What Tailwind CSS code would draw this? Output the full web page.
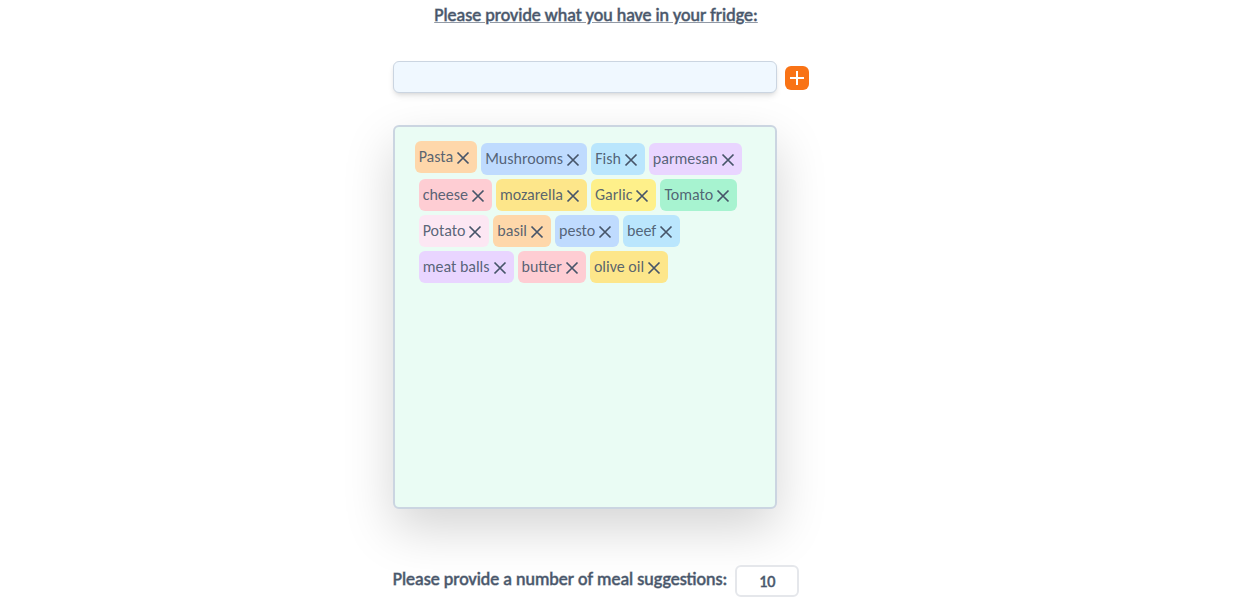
<!DOCTYPE html>
<html lang="en">
<head>
<meta charset="utf-8">
<meta name="viewport" content="width=device-width, initial-scale=1">
<title>Fridge meals</title>
<script src="https://cdn.jsdelivr.net/npm/@tailwindcss/browser@4"></script>
</head>
<body class="bg-white font-[Carlito,Lato,sans-serif] text-base text-[#475569]">
<svg class="hidden"><symbol id="x" viewBox="0 0 20 20"><path d="M4.5 4.5l11 11M15.5 4.5l-11 11" fill="none" stroke="#475569" stroke-width="1.7"/></symbol></svg>
<main class="flex justify-center pr-[43px] pt-px">
<form class="flex flex-col">
  <label for="item" class="self-center text-lg leading-7 underline [-webkit-text-stroke:1px_#47556999]">Please provide what you have in your fridge:</label>
  <div class="mt-8 flex items-center gap-2">
    <input id="item" type="text" class="h-8 w-96 rounded-md border border-[#cbd5e1] bg-[#f0f8ff] px-2 shadow-md">
    <button type="button" aria-label="Add" class="mt-0.5 -mr-3 flex size-6 items-center justify-center rounded-md bg-[#f97316] text-white">
      <svg class="size-6" viewBox="0 0 24 24"><path d="M12 5v14M5 12h14" fill="none" stroke="currentColor" stroke-width="2"/></svg>
    </button>
  </div>
  <ul class="mt-8 flex h-96 w-96 flex-wrap content-start items-start rounded-md border-2 border-[#cbd5e1] bg-[#eafcf4] px-5 pt-3.5 text-[#475569]/90 shadow-[0_20px_50px_rgba(0,0,0,0.17)]">
    <li class="flex h-8 items-center rounded-md bg-[#fed7aa] px-1">Pasta<button type="button" aria-label="Remove Pasta" class="pt-0.5"><svg class="size-5"><use href="#x"/></svg></button></li>
    <li class="my-0.5 ml-1 flex h-8 items-center rounded-md bg-[#bfdbfe] px-1">Mushrooms<button type="button" aria-label="Remove Mushrooms" class="pt-0.5"><svg class="size-5"><use href="#x"/></svg></button></li>
    <li class="my-0.5 ml-1 flex h-8 items-center rounded-md bg-[#bae6fd] px-1">Fish<button type="button" aria-label="Remove Fish" class="pt-0.5"><svg class="size-5"><use href="#x"/></svg></button></li>
    <li class="my-0.5 ml-1 flex h-8 items-center rounded-md bg-[#e9d5ff] px-1">parmesan<button type="button" aria-label="Remove parmesan" class="pt-0.5"><svg class="size-5"><use href="#x"/></svg></button></li>
    <li class="my-0.5 ml-1 flex h-8 items-center rounded-md bg-[#fecdd3] px-1">cheese<button type="button" aria-label="Remove cheese" class="pt-0.5"><svg class="size-5"><use href="#x"/></svg></button></li>
    <li class="my-0.5 ml-1 flex h-8 items-center rounded-md bg-[#fde68a] px-1">mozarella<button type="button" aria-label="Remove mozarella" class="pt-0.5"><svg class="size-5"><use href="#x"/></svg></button></li>
    <li class="my-0.5 ml-1 flex h-8 items-center rounded-md bg-[#fef08a] px-1">Garlic<button type="button" aria-label="Remove Garlic" class="pt-0.5"><svg class="size-5"><use href="#x"/></svg></button></li>
    <li class="my-0.5 ml-1 flex h-8 items-center rounded-md bg-[#a7f3d0] px-1">Tomato<button type="button" aria-label="Remove Tomato" class="pt-0.5"><svg class="size-5"><use href="#x"/></svg></button></li>
    <li class="my-0.5 ml-1 flex h-8 items-center rounded-md bg-[#fce7f3] px-1">Potato<button type="button" aria-label="Remove Potato" class="pt-0.5"><svg class="size-5"><use href="#x"/></svg></button></li>
    <li class="my-0.5 ml-1 flex h-8 items-center rounded-md bg-[#fed7aa] px-1">basil<button type="button" aria-label="Remove basil" class="pt-0.5"><svg class="size-5"><use href="#x"/></svg></button></li>
    <li class="my-0.5 ml-1 flex h-8 items-center rounded-md bg-[#bfdbfe] px-1">pesto<button type="button" aria-label="Remove pesto" class="pt-0.5"><svg class="size-5"><use href="#x"/></svg></button></li>
    <li class="my-0.5 ml-1 flex h-8 items-center rounded-md bg-[#bae6fd] px-1">beef<button type="button" aria-label="Remove beef" class="pt-0.5"><svg class="size-5"><use href="#x"/></svg></button></li>
    <li class="my-0.5 ml-1 flex h-8 items-center rounded-md bg-[#e9d5ff] px-1">meat balls<button type="button" aria-label="Remove meat balls" class="pt-0.5"><svg class="size-5"><use href="#x"/></svg></button></li>
    <li class="my-0.5 ml-1 flex h-8 items-center rounded-md bg-[#fecdd3] px-1">butter<button type="button" aria-label="Remove butter" class="pt-0.5"><svg class="size-5"><use href="#x"/></svg></button></li>
    <li class="my-0.5 ml-1 flex h-8 items-center rounded-md bg-[#fde68a] px-1">olive oil<button type="button" aria-label="Remove olive oil" class="pt-0.5"><svg class="size-5"><use href="#x"/></svg></button></li>
  </ul>
  <div class="mt-14 flex items-center gap-2">
    <label for="count" class="pb-1 text-lg leading-7 [-webkit-text-stroke:1px_#47556999]">Please provide a number of meal suggestions:</label>
    <input id="count" type="text" inputmode="numeric" value="10" class="h-8 w-16 rounded-md border-2 border-[#e5e7eb] bg-white text-center [-webkit-text-stroke:1px_#47556999]">
  </div>
</form>
</main>
</body>
</html>
